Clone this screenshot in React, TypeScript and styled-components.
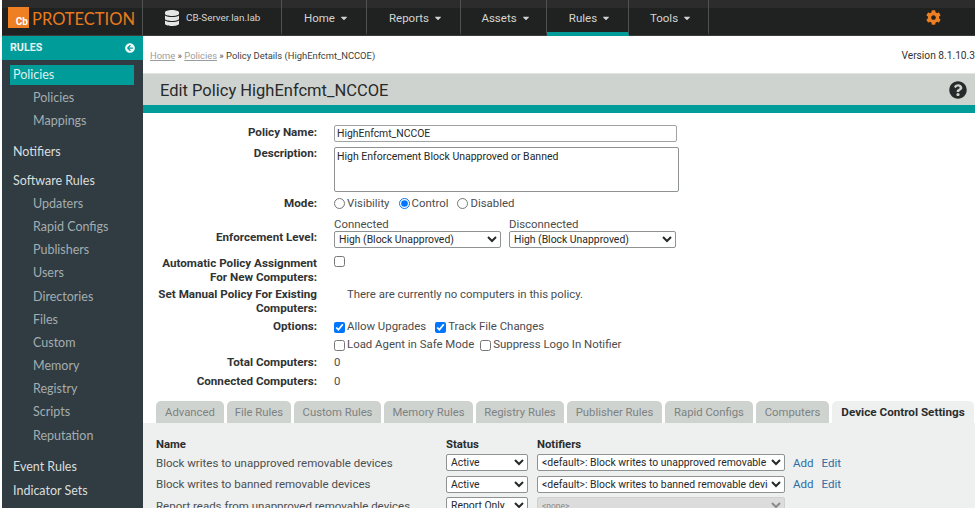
import React from 'react';
import styled, { createGlobalStyle } from 'styled-components';
import { FaArrowCircleLeft, FaCaretDown, FaCog, FaDatabase, FaQuestionCircle } from 'react-icons/fa';

const teal = '#009c9a';
const bodyFont = `Roboto, "Liberation Sans", sans-serif`;

const GlobalStyle = createGlobalStyle`
  html, body {
    margin: 0;
    height: 510px;
    overflow: hidden;
    background: #fff;
  }
  * { box-sizing: border-box; }
`;

const Page = styled.div`
  width: 975px;
  height: 508px;
  padding-left: 2px;
  display: flex;
  flex-direction: column;
  overflow: hidden;
  font-family: ${bodyFont};
`;

const Header = styled.header`
  height: 36px;
  flex: none;
  display: flex;
  background: linear-gradient(#2b2c2b 0, #2b2c2b 8px, #202221 8px, #202221 100%);
  border-bottom: 1px solid #3a3c3b;
`;

const Logo = styled.div`
  width: 141px;
  flex: none;
  display: flex;
  align-items: center;
  padding-left: 6px;
  border-right: 1px solid #505251;
`;

const LogoMark = styled.div`
  width: 21px;
  height: 21px;
  background: #ee7f22;
  color: #fff;
  font: 700 10px/1 Roboto, sans-serif;
  display: flex;
  align-items: flex-end;
  justify-content: flex-end;
  padding: 0 1px 1px 0;
`;

const LogoText = styled.span`
  color: #e97a1e;
  font: 400 16.5px/1 Lato, sans-serif;
  margin-left: 3px;
  margin-top: 4px;
`;

const NavCell = styled.div<{ $width: number; $active?: boolean }>`
  width: ${p => p.$width}px;
  flex: none;
  display: flex;
  align-items: center;
  justify-content: center;
  gap: 4px;
  color: #d2d4d3;
  font-size: 11.5px;
  border-right: 1px solid #505251;
  border-bottom: 4px solid ${p => (p.$active ? teal : 'transparent')};
  padding: 3px 0 0 5px;
  margin-bottom: -1px;
  svg { flex: none; }
`;

const ServerCell = styled(NavCell)`
  justify-content: flex-start;
  padding-left: 21px;
  font-size: 9.9px;
  gap: 6px;
`;

const GearCell = styled.div`
  flex: 1;
  display: flex;
  align-items: center;
  padding: 0 0 1px 217px;
  color: #ee7f22;
`;

const Body = styled.div`
  flex: 1;
  display: flex;
  min-height: 0;
`;

const Sidebar = styled.aside`
  width: 141px;
  flex: none;
  background: #303c42;
  font-family: Lato, sans-serif;
`;

const SideTitle = styled.div`
  height: 24px;
  background: ${teal};
  color: #e8f4f3;
  font: 700 10.7px/24px ${bodyFont};
  padding: 0 8px;
  display: flex;
  align-items: center;
  justify-content: space-between;
`;

const SideActive = styled.div`
  height: 20px;
  margin: 5px 9px 1px 8px;
  padding-left: 3px;
  background: ${teal};
  color: #dff0ef;
  font-size: 12.5px;
  line-height: 20px;
`;

const SideTop = styled.div<{ $gap: number }>`
  height: 23.2px;
  margin-top: ${p => p.$gap}px;
  padding-left: 11px;
  color: #d9dedf;
  font-size: 12.5px;
  line-height: 23px;
`;

const SideSub = styled.div`
  height: 23.2px;
  padding-left: 31px;
  color: #a3adb0;
  font-size: 12.5px;
  line-height: 23px;
`;

const Main = styled.main`
  flex: 1;
  min-width: 0;
  display: flex;
  flex-direction: column;
`;

const Crumbs = styled.div`
  height: 37px;
  flex: none;
  display: flex;
  justify-content: space-between;
  align-items: center;
  padding: 1px 0 0 7px;
  font-size: 9.4px;
  color: #3c3f40;
`;

const CrumbLink = styled.a`
  color: #9a9d9e;
  text-decoration: underline;
`;

const Version = styled.span`
  font-size: 10.2px;
  color: #333;
`;

const TitleBar = styled.div`
  height: 40px;
  flex: none;
  background: #cfd3d0;
  border-bottom: 8px solid ${teal};
  border-top: 1px solid #e2e4e3;
  display: flex;
  align-items: center;
  justify-content: space-between;
  padding: 1px 8px 0 17px;
  color: #272a2a;
  font-size: 16.5px;
`;

const Form = styled.div`
  height: 286px;
  flex: none;
  padding-top: 12px;
  display: grid;
  grid-template-columns: 174px 1fr;
  grid-auto-rows: min-content;
  column-gap: 17px;
`;

const Label = styled.div<{ $height: number; $nudge?: number }>`
  height: ${p => p.$height}px;
  padding-top: ${p => p.$nudge ?? 1}px;
  text-align: right;
  font-size: 11.65px;
  font-weight: 700;
  line-height: 13.5px;
  color: #303334;
  white-space: nowrap;
`;

const Field = styled.div<{ $height: number; $nudge?: number }>`
  height: ${p => p.$height}px;
  padding-top: ${p => p.$nudge ?? 0}px;
  font-size: 11.4px;
  line-height: 13.5px;
  color: #4a4d4e;
  display: flex;
  align-items: flex-start;
`;

const NoComputers = styled.span`
  padding-left: 13px;
`;

const TextInput = styled.input`
  width: 343px;
  height: 17px;
  padding: 0 2px;
  border: 1px solid #a0a3a3;
  border-radius: 2px;
  font: 10.4px ${bodyFont};
  color: #26292a;
`;

const TextArea = styled.textarea`
  width: 345px;
  height: 45px;
  padding: 2px;
  border: 1px solid #8f9292;
  border-radius: 2px;
  resize: none;
  font: 10.5px/13px ${bodyFont};
  color: #26292a;
`;

const Choice = styled.label<{ $gap?: number }>`
  display: inline-flex;
  align-items: center;
  margin-right: ${p => p.$gap ?? 9}px;
  white-space: nowrap;

  input {
    margin: 0 2px 0 0;
    width: 11px;
    height: 11px;
    flex: none;
  }
`;

const Levels = styled.div`
  display: flex;
  gap: 7px;
`;

const LevelColumn = styled.div`
  width: 168px;
  display: flex;
  flex-direction: column;
  line-height: 14px;
`;

const Select = styled.select<{ $width: number; $muted?: boolean }>`
  width: ${p => p.$width}px;
  height: 17px;
  padding: 0;
  border: 1px solid ${p => (p.$muted ? '#d0d0d0' : '#8f9292')};
  border-radius: 2px;
  background: ${p => (p.$muted ? '#dcdcdc' : '#fff')};
  color: ${p => (p.$muted ? '#8a8a8a' : '#26292a')};
  font: ${p => (p.$muted ? 8.5 : 10.4)}px ${bodyFont};
`;

const OptionRows = styled.div`
  display: flex;
  flex-direction: column;
  gap: 4px;
`;

const OptionRow = styled.div`
  display: flex;
  height: 14px;
`;

const Tabs = styled.div`
  height: 22px;
  flex: none;
  margin-top: 2px;
  padding-left: 13px;
  display: flex;
  gap: 3px;
`;

const Tab = styled.div<{ $width: number; $active?: boolean }>`
  width: ${p => p.$width}px;
  flex: none;
  border-radius: 5px 5px 0 0;
  background: ${p => (p.$active ? '#eeefef' : '#cfd3d0')};
  color: ${p => (p.$active ? '#2a2d2e' : '#7d8282')};
  font-size: ${p => (p.$active ? 11.7 : 11.3)}px;
  font-weight: ${p => (p.$active ? 700 : 400)};
  line-height: 23px;
  text-align: center;
  white-space: nowrap;
`;

const Panel = styled.div`
  flex: 1;
  min-height: 0;
  overflow: hidden;
  background: #eeefef;
  padding: 15px 0 0 13px;
  display: grid;
  grid-template-columns: 290px 91px 256px auto;
  grid-template-rows: 14px;
  grid-auto-rows: 21.5px;
  align-items: center;
  font-size: 11.5px;
  color: #4d5051;
`;

const HeadCell = styled.div`
  font-weight: 700;
  font-size: 11.3px;
  line-height: 14px;
  color: #2a2d2e;
  align-self: start;
`;

const Links = styled.div`
  display: flex;
  gap: 8px;
  color: #2e6da4;
  font-size: 11.5px;
`;

const tabs = [
  { label: 'Advanced', width: 68 },
  { label: 'File Rules', width: 64 },
  { label: 'Custom Rules', width: 87 },
  { label: 'Memory Rules', width: 89 },
  { label: 'Registry Rules', width: 88 },
  { label: 'Publisher Rules', width: 95 },
  { label: 'Rapid Configs', width: 88 },
  { label: 'Computers', width: 73 },
];

const softwareRules = [
  'Updaters', 'Rapid Configs', 'Publishers', 'Users', 'Directories',
  'Files', 'Custom', 'Memory', 'Registry', 'Scripts', 'Reputation',
];

const navItems = [
  { label: 'Home', width: 85 },
  { label: 'Reports', width: 94 },
  { label: 'Assets', width: 86 },
  { label: 'Rules', width: 82, active: true },
  { label: 'Tools', width: 80 },
];

const devices = [
  { name: 'Block writes to unapproved removable devices', status: 'Active', notifier: '<default>: Block writes to unapproved removable devices' },
  { name: 'Block writes to banned removable devices', status: 'Active', notifier: '<default>: Block writes to banned removable devices' },
  { name: 'Report reads from unapproved removable devices', status: 'Report Only', notifier: '<none>', muted: true },
];

export default function App() {
  return (
    <>
      <GlobalStyle />
      <Page>
        <Header>
          <Logo>
            <LogoMark>Cb</LogoMark>
            <LogoText>PROTECTION</LogoText>
          </Logo>
          <ServerCell $width={139}>
            <FaDatabase size={16} color="#e6e6e6" />
            CB-Server.lan.lab
          </ServerCell>
          {navItems.map(item => (
            <NavCell key={item.label} $width={item.width} $active={item.active}>
              {item.label}
              <FaCaretDown size={10} />
            </NavCell>
          ))}
          <GearCell>
            <FaCog size={15} />
          </GearCell>
        </Header>
        <Body>
          <Sidebar>
            <SideTitle>
              RULES
              <FaArrowCircleLeft size={10} color="#f2f7f7" />
            </SideTitle>
            <SideActive>Policies</SideActive>
            <SideSub>Policies</SideSub>
            <SideSub>Mappings</SideSub>
            <SideTop $gap={8}>Notifiers</SideTop>
            <SideTop $gap={5}>Software Rules</SideTop>
            {softwareRules.map(rule => <SideSub key={rule}>{rule}</SideSub>)}
            <SideTop $gap={8}>Event Rules</SideTop>
            <SideTop $gap={1}>Indicator Sets</SideTop>
          </Sidebar>
          <Main>
            <Crumbs>
              <span>
                <CrumbLink>Home</CrumbLink> » <CrumbLink>Policies</CrumbLink> » Policy Details (HighEnfcmt_NCCOE)
              </span>
              <Version>Version 8.1.10.3</Version>
            </Crumbs>
            <TitleBar>
              Edit Policy HighEnfcmt_NCCOE
              <FaQuestionCircle size={18} color="#272a2a" />
            </TitleBar>
            <Form>
              <Label $height={22}>Policy Name:</Label>
              <Field $height={22}><TextInput readOnly value="HighEnfcmt_NCCOE" /></Field>
              <Label $height={49} $nudge={0}>Description:</Label>
              <Field $height={49}><TextArea readOnly value="High Enforcement Block Unapproved or Banned" /></Field>
              <Label $height={21}>Mode:</Label>
              <Field $height={21} $nudge={1}>
                <Choice><input type="radio" name="mode" />Visibility</Choice>
                <Choice><input type="radio" name="mode" defaultChecked />Control</Choice>
                <Choice><input type="radio" name="mode" />Disabled</Choice>
              </Field>
              <Label $height={39} $nudge={0}><br />Enforcement Level:</Label>
              <Field $height={39}>
                <Levels>
                  <LevelColumn>
                    Connected
                    <Select $width={167} defaultValue="high"><option value="high">High (Block Unapproved)</option></Select>
                  </LevelColumn>
                  <LevelColumn>
                    Disconnected
                    <Select $width={167} defaultValue="high"><option value="high">High (Block Unapproved)</option></Select>
                  </LevelColumn>
                </Levels>
              </Field>
              <Label $height={31}>Automatic Policy Assignment<br />For New Computers:</Label>
              <Field $height={31}><Choice><input type="checkbox" /></Choice></Field>
              <Label $height={32}>Set Manual Policy For Existing<br />Computers:</Label>
              <Field $height={32} $nudge={1}><NoComputers>There are currently no computers in this policy.</NoComputers></Field>
              <Label $height={36}>Options:</Label>
              <Field $height={36} $nudge={1}>
                <OptionRows>
                  <OptionRow>
                    <Choice><input type="checkbox" defaultChecked />Allow Upgrades</Choice>
                    <Choice><input type="checkbox" defaultChecked />Track File Changes</Choice>
                  </OptionRow>
                  <OptionRow>
                    <Choice $gap={6}><input type="checkbox" />Load Agent in Safe Mode</Choice>
                    <Choice><input type="checkbox" />Suppress Logo In Notifier</Choice>
                  </OptionRow>
                </OptionRows>
              </Field>
              <Label $height={19}>Total Computers:</Label>
              <Field $height={19} $nudge={1}>0</Field>
              <Label $height={19}>Connected Computers:</Label>
              <Field $height={19} $nudge={1}>0</Field>
            </Form>
            <Tabs>
              {tabs.map(tab => <Tab key={tab.label} $width={tab.width}>{tab.label}</Tab>)}
              <Tab $width={142} $active>Device Control Settings</Tab>
            </Tabs>
            <Panel>
              <HeadCell>Name</HeadCell>
              <HeadCell>Status</HeadCell>
              <HeadCell>Notifiers</HeadCell>
              <span />
              {devices.map(device => (
                <React.Fragment key={device.name}>
                  <span>{device.name}</span>
                  <div>
                    <Select $width={82} defaultValue={device.status}><option>{device.status}</option></Select>
                  </div>
                  <div>
                    <Select $width={248} $muted={device.muted} defaultValue={device.notifier}><option>{device.notifier}</option></Select>
                  </div>
                  {device.muted ? <span /> : <Links><span>Add</span><span>Edit</span></Links>}
                </React.Fragment>
              ))}
            </Panel>
          </Main>
        </Body>
      </Page>
    </>
  );
}
